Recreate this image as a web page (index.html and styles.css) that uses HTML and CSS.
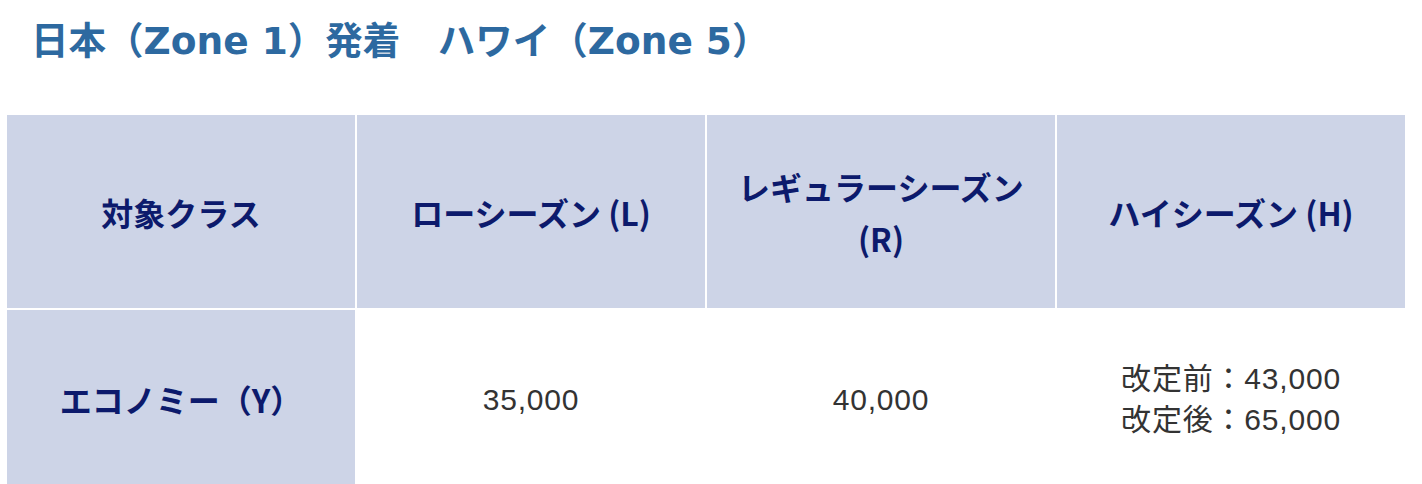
FILE: index.html
```html
<!DOCTYPE html>
<html lang="ja">
<head>
<meta charset="utf-8">
<title>日本（Zone 1）発着　ハワイ（Zone 5）</title>
<link rel="stylesheet" href="styles.css">
</head>
<body>
<div class="page">
  <h2 class="title">日本（Zone 1）発着　ハワイ（Zone 5）</h2>
  <table class="fare">
    <thead>
      <tr>
        <th>対象クラス</th>
        <th>ローシーズン (L)</th>
        <th>レギュラーシーズン<br>(R)</th>
        <th>ハイシーズン (H)</th>
      </tr>
    </thead>
    <tbody>
      <tr>
        <th class="rowhead">エコノミー（Y）</th>
        <td>35,000</td>
        <td>40,000</td>
        <td>改定前：43,000<br>改定後：65,000</td>
      </tr>
    </tbody>
  </table>
</div>
</body>
</html>
```

FILE: styles.css
```css
html, body {
  margin: 0;
  padding: 0;
  background: #ffffff;
}

.page {
  padding: 0 15px 0 5px;
  font-family: "Liberation Sans", "Noto Sans CJK JP", sans-serif;
}

.title {
  margin: 0;
  padding: 16px 0 0 26px;
  height: 113px;
  box-sizing: border-box;
  font-family: "DejaVu Sans", "Noto Sans CJK JP", sans-serif;
  font-size: 37.5px;
  line-height: 51px;
  font-weight: bold;
  color: #2d69a0;
}

.fare {
  width: 100%;
  table-layout: fixed;
  border-collapse: separate;
  border-spacing: 2px;
}

.fare th {
  background: #cdd4e7;
  color: #0c1a6c;
  font-family: "Noto Sans CJK JP", "Liberation Sans", sans-serif;
  font-weight: bold;
  font-size: 32px;
  line-height: 52px;
  text-align: center;
  vertical-align: middle;
  padding: 0;
}

.fare thead th {
  height: 193px;
}

.fare td {
  background: #ffffff;
  color: #333333;
  font-size: 30px;
  line-height: 41px;
  letter-spacing: 0.8px;
  text-align: center;
  vertical-align: middle;
  height: 178px;
  padding: 0;
}

.fare .rowhead {
  height: 178px;
}
```
